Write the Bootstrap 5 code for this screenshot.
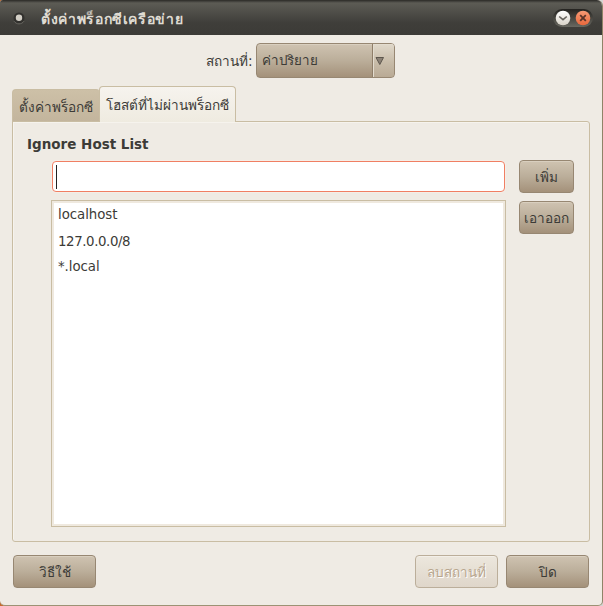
<!DOCTYPE html>
<html lang="th">
<head>
<meta charset="utf-8">
<meta name="viewport" content="width=device-width, initial-scale=1">
<title>ตั้งค่าพร็อกซีเครือข่าย</title>
<link href="https://cdn.jsdelivr.net/npm/bootstrap@5.3.0/dist/css/bootstrap.min.css" rel="stylesheet">
<style>
html,body{height:100%;margin:0;overflow:hidden}
body{background:linear-gradient(90deg,#c56a2d 50%,#d5d5d3 50%);font-family:"DejaVu Sans",sans-serif;font-size:13.33px;line-height:18px;color:#3c3b37}
.win{width:603px;height:606px;background:#efebe4;border-right:1px solid #8f8468;border-bottom:1px solid #9c9274;border-radius:3px 6px 5px 5px;overflow:hidden}
.titlebar{height:35px;margin-right:-1px;background:linear-gradient(#3c3b37 0,#5d5c55 2px,#3f3e3a 22px,#3c3b37);border-top:1px solid #33322e;color:#dfdbd2;padding-left:13px;padding-right:8px;flex:none}
.title-text{font-weight:700;font-size:14px;letter-spacing:.65px;margin-left:16px;padding-top:2px}
.t{display:inline-block;white-space:nowrap}
.btn .t,.nav-link .t,label .t{font-size:13.6px}
.btn.combo .t{padding-top:1px;font-size:13.4px}
.nav-link .t,label .t{padding-top:1px}
.nav-link.one .t{padding-top:3px;margin-right:1px}
.place{height:35px}
.btn.cl{height:33px;padding:0;font-size:inherit;line-height:18px;color:#3c3b37;border:1px solid #978772;border-radius:4px;background:linear-gradient(#cfc3b1,#bbae9a 50%,#a4917a);box-shadow:inset 0 1px #d9cfbf,0 0 0 1px #f0ece680;display:flex;align-items:center;justify-content:center}
.btn.w55{width:55px}.btn.w83{width:83px}
.btn.w55 .t{margin-right:1px}
.btn.cl.off{opacity:1;color:#b8a68e;border-color:#bbae9a;background:linear-gradient(#ece7dd,#dfd6ca);text-shadow:1px 1px #fff;box-shadow:inset 0 1px #f3efe8}
.toprow{height:51px;padding-left:206px;padding-top:8px;flex:none}
.btn.cl.combo{width:139px;height:35px;margin-left:3px;justify-content:space-between;padding-left:5px}
.arrow{width:22px;height:33px;border-left:1px solid #8f7e69;background:linear-gradient(#e0d8ca,#c8bca9 55%,#b9aa95);border-radius:0 3px 3px 0;box-shadow:inset 1px 1px #e3dccf}
.tabs{padding-left:12px;height:36px;flex:none;margin-bottom:-1px;z-index:1}
.tabs .nav-link{padding:0;color:#3c3b37;border:1px solid #c9bda3;border-radius:4px 4px 0 0;display:flex;justify-content:center;align-items:center;margin:0}
.tabs .one{width:88px;height:33px;background:linear-gradient(#cdc0a7,#c3b59d);border-right:0}
.tabs .nav-link.two{width:137px;height:36px;color:#3c3b37;background:linear-gradient(#f6f3ee,#efebe0);border-color:#c9bda3;border-bottom:0;margin-left:-1px}
.tabs .two .t{margin-right:1px}
.pane{margin:0 12px 0 12px;width:578px;height:421px;border:1px solid #c9bda3;border-radius:0 3px 3px 3px;box-shadow:inset 1px 1px #f6f3ed;flex:none;padding:13px 14px 14px}
.head{font-weight:700;font-size:13.5px;height:18px}
.entries{margin-left:24px;width:455px}
.form-control.host{width:453px;height:31px;margin:0 1px;border:1px solid #f07f63;border-radius:4px;padding:3px;background:#fff;box-shadow:0 0 0 1px #f5eee7}
.caret{width:1px;height:24px;background:#222}
.hosts{height:327px;margin-top:8px;border:1px solid #c9bda3;background:#fff;border-radius:0;box-shadow:inset 0 0 0 2px #efe9df;padding:1px 6px}
.hosts .list-group-item{border:0;background:none;padding:0;color:#3c3b37;height:26px;line-height:26px;letter-spacing:-.05px}
.hosts .addr{letter-spacing:-.4px;line-height:28px}
.side{margin:-1px 0 0 13px;gap:8px}
.actions{padding:0 13px 0 13px;margin-top:13px}
</style>
<script src="https://cdn.jsdelivr.net/npm/bootstrap@5.3.0/dist/js/bootstrap.bundle.min.js"></script>
</head>
<body>
<main class="win d-flex flex-column">
<header class="titlebar d-flex align-items-center">
<svg width="12" height="14" viewBox="0 0 12 14"><circle cx="6" cy="7" r="5.5" fill="#32312e"/><path d="M1 10.2A6 6 0 0 0 11 10.2" fill="none" stroke="#696861"/><circle cx="6" cy="6.8" r="3.2" fill="#d2cec5"/></svg>
<span class="title-text t">ตั้งค่าพร็อกซีเครือข่าย</span>
<svg class="ms-auto" width="42" height="20" viewBox="0 0 42 20"><defs><linearGradient id="a" x2="0" y2="1"><stop stop-color="#242320"/><stop offset="1" stop-color="#696860"/></linearGradient><linearGradient id="w" x2="0" y2="1"><stop stop-color="#fff"/><stop offset="1" stop-color="#d8d2c7"/></linearGradient><linearGradient id="r" x2="0" y2="1"><stop stop-color="#f79a75"/><stop offset="1" stop-color="#e9683c"/></linearGradient></defs>
<rect x="0" y="1" width="40" height="18" rx="9" fill="url(#a)"/><circle cx="10" cy="10" r="7.3" fill="url(#w)"/><circle cx="30" cy="10" r="7.3" fill="url(#r)"/><path d="M6.2 8.5L10 11.7L13.8 8.5" fill="none" stroke="#65625c" stroke-width="1.6"/><path d="M27.2 7.2l5.6 5.6m0-5.6l-5.6 5.6" stroke="#5b3429" stroke-width="1.8"/></svg>
</header>
<div class="toprow d-flex align-items-start">
<label class="place d-flex align-items-center"><span class="t">สถานที่:</span></label>
<button class="btn cl combo" type="button"><span class="t">ค่าปริยาย</span><span class="arrow d-flex align-items-center"><svg width="14" height="10" viewBox="0 0 14 10"><path d="M3 1.5H10.5L6.8 8.5Z" fill="#8b8175" stroke="#5d564d"/></svg></span></button>
</div>
<nav class="nav nav-tabs border-0 tabs align-items-end flex-nowrap">
<a class="nav-link one" href="#"><span class="t">ตั้งค่าพร็อกซี</span></a>
<a class="nav-link active two" href="#"><span class="t">โฮสต์ที่ไม่ผ่านพร็อกซี</span></a>
</nav>
<section class="pane">
<div class="head">Ignore Host List</div>
<div class="d-flex mt-2">
<div class="entries">
<div class="form-control host"><div class="caret"></div></div>
<ul class="list-group hosts">
<li class="list-group-item">localhost</li><li class="list-group-item addr">127.0.0.0/8</li><li class="list-group-item">*.local</li>
</ul>
</div>
<div class="d-flex flex-column side">
<button class="btn cl w55" type="button"><span class="t">เพิ่ม</span></button>
<button class="btn cl w55" type="button"><span class="t">เอาออก</span></button>
</div>
</div>
</section>
<footer class="actions d-flex">
<button class="btn cl w83 me-auto" type="button"><span class="t">วิธีใช้</span></button>
<button class="btn cl w83 off me-2" type="button" disabled><span class="t">ลบสถานที่</span></button>
<button class="btn cl w83" type="button"><span class="t">ปิด</span></button>
</footer>
</main>
</body>
</html>
